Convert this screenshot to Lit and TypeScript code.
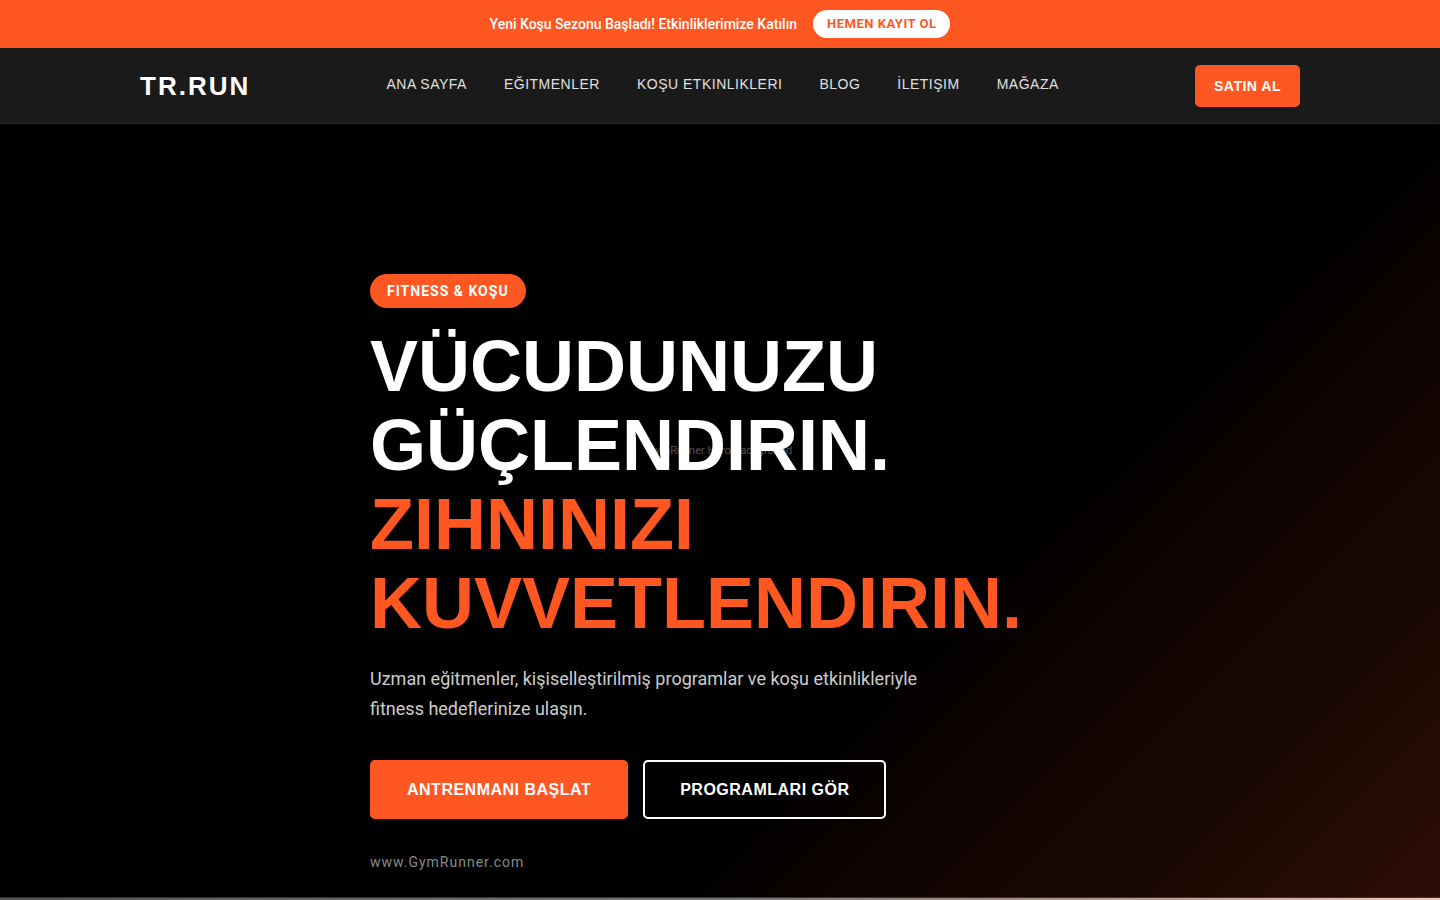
import { LitElement, html, css } from "lit";
import { customElement } from "lit/decorators.js";

const NAV = ["ANA SAYFA", "EĞITMENLER", "KOŞU ETKINLIKLERI", "BLOG", "İLETIŞIM", "MAĞAZA"];

@customElement("announcement-bar")
class AnnouncementBar extends LitElement {
  static styles = css`
    :host {
      display: flex;
      flex-wrap: wrap;
      justify-content: center;
      align-items: center;
      gap: 16px;
      padding: 10px 20px;
      background: #ff5722;
      color: #fff;
      font-size: 14px;
      font-weight: 500;
      line-height: 24px;
    }
    .cta {
      padding: 2px 14px;
      border-radius: 20px;
      background: #fff;
      color: #ff5722;
      font-size: 13px;
      font-weight: 700;
      letter-spacing: 0.5px;
      text-decoration: none;
    }
  `;
  render() {
    return html`
      <span>Yeni Koşu Sezonu Başladı! Etkinliklerimize Katılın</span>
      <a class="cta" href="#kayit">HEMEN KAYIT OL</a>
    `;
  }
}

@customElement("site-header")
class SiteHeader extends LitElement {
  static styles = css`
    :host {
      display: block;
      background: #1a1a1a;
      border-bottom: 1px solid #2a2a2a;
      font-family: "Liberation Sans", Arial, sans-serif;
    }
    .inner {
      box-sizing: border-box;
      max-width: 1200px;
      margin: 0 auto;
      padding: 17px 20px 16px;
      display: flex;
      flex-wrap: wrap;
      justify-content: space-between;
      align-items: center;
      gap: 16px;
    }
    .logo {
      color: #fff;
      font-size: 26px;
      font-weight: 700;
      letter-spacing: 2px;
      line-height: 42px;
      text-decoration: none;
    }
    .links {
      display: flex;
      flex-wrap: wrap;
      gap: 37px;
      margin: 0;
      padding: 0 0 4px;
      list-style: none;
    }
    .links a {
      color: #e0e0e0;
      font-size: 14px;
      letter-spacing: 0.5px;
      line-height: 24px;
      text-decoration: none;
    }
    .buy {
      padding: 0 19px;
      border: 0;
      border-radius: 5px;
      background: #ff5722;
      color: #fff;
      font: 700 14px/42px "Liberation Sans", Arial, sans-serif;
      letter-spacing: 0.5px;
      cursor: pointer;
    }
  `;
  render() {
    return html`
      <header class="inner">
        <a class="logo" href="#">TR.RUN</a>
        <nav>
          <ul class="links">
            ${NAV.map((label) => html`<li><a href="#">${label}</a></li>`)}
          </ul>
        </nav>
        <button class="buy" type="button">SATIN AL</button>
      </header>
    `;
  }
}

@customElement("hero-section")
class HeroSection extends LitElement {
  static styles = css`
    :host {
      position: relative;
      display: flex;
      justify-content: center;
      padding: 150px 20px 22px;
      background: linear-gradient(135deg, #000 64%, #120502 77%, #1c0a03 88%, #2e0e07 100%);
    }
    .backdrop {
      position: absolute;
      inset: 0;
      display: flex;
      justify-content: center;
      align-items: center;
      padding-bottom: 120px;
      color: #fff;
      font-size: 11px;
      opacity: 0.3;
    }
    .content {
      position: relative;
      width: 100%;
      max-width: 700px;
    }
    .tag {
      display: inline-block;
      padding: 0 17px;
      border-radius: 25px;
      background: #ff5722;
      color: #fff;
      font-size: 14px;
      font-weight: 700;
      letter-spacing: 1px;
      line-height: 34px;
      vertical-align: top;
    }
    h1 {
      margin: 19px 0 21px;
      color: #fff;
      font: 700 72px/79px "Liberation Sans", Arial, sans-serif;
    }
    .accent {
      display: block;
      color: #ff5722;
    }
    .lead {
      max-width: 600px;
      margin: 0 0 36px;
      color: #ccc;
      font-size: 18px;
      line-height: 30px;
    }
    .actions {
      display: flex;
      flex-wrap: wrap;
      gap: 15px;
      margin-bottom: 30px;
    }
    .btn {
      padding: 0 35px;
      border: 2px solid #ff5722;
      border-radius: 5px;
      background: #ff5722;
      color: #fff;
      font: 700 16px/55px "Liberation Sans", Arial, sans-serif;
      letter-spacing: 0.5px;
      cursor: pointer;
    }
    .outline {
      border-color: #fff;
      background: transparent;
    }
    .site {
      display: block;
      color: #888;
      font-size: 14px;
      letter-spacing: 1px;
      line-height: 26px;
      text-decoration: none;
    }
  `;
  render() {
    return html`
      <div class="backdrop">GymRunner Hero Background</div>
      <div class="content">
        <span class="tag">FITNESS &amp; KOŞU</span>
        <h1>VÜCUDUNUZU GÜÇLENDIRIN. <span class="accent">ZIHNINIZI KUVVETLENDIRIN.</span></h1>
        <p class="lead">
          Uzman eğitmenler, kişiselleştirilmiş programlar ve koşu etkinlikleriyle fitness
          hedeflerinize ulaşın.
        </p>
        <div class="actions">
          <button class="btn" type="button">ANTRENMANI BAŞLAT</button>
          <button class="btn outline" type="button">PROGRAMLARI GÖR</button>
        </div>
        <a class="site" href="#">www.GymRunner.com</a>
      </div>
    `;
  }
}

@customElement("app-root")
class AppRoot extends LitElement {
  static styles = css`
    :host {
      display: block;
      min-height: 100vh;
      background: #000;
      font-family: Roboto, sans-serif;
    }
    .edge {
      height: 2px;
      border-top: 1px solid #333;
      background: linear-gradient(90deg, #555 0%, #777 50%, #a89088 75%, #f0c8bc 100%);
    }
  `;
  render() {
    return html`
      <announcement-bar></announcement-bar>
      <site-header></site-header>
      <main>
        <hero-section></hero-section>
        <div class="edge"></div>
      </main>
    `;
  }
}
